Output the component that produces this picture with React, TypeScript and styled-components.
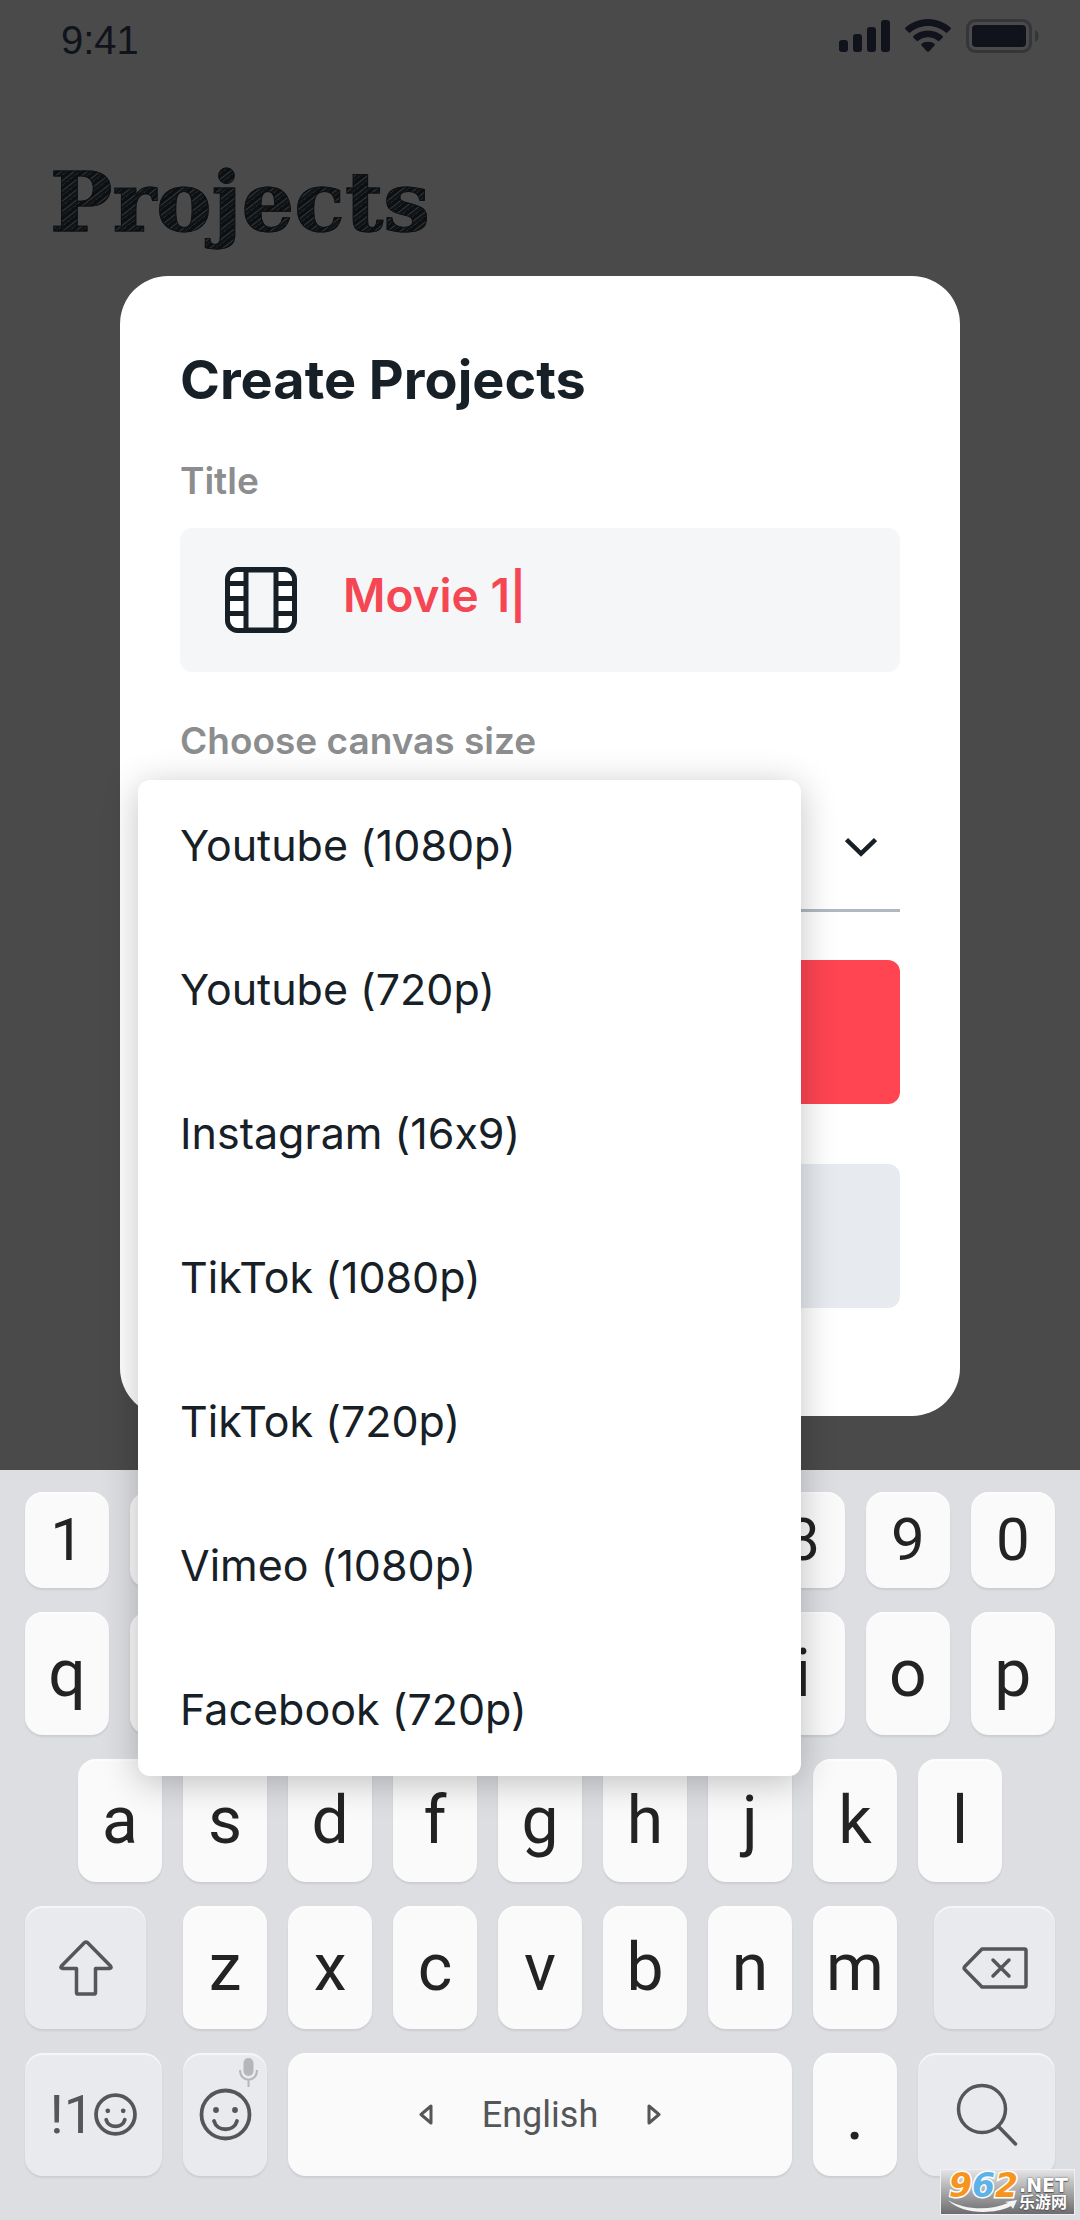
import React, { useState } from "react";
import styled, { createGlobalStyle } from "styled-components";

const GlobalStyle = createGlobalStyle`
  *, *::before, *::after { box-sizing: border-box; }
  body { margin: 0; background: #dddee2; }
  button, input, select { font: inherit; color: inherit; margin: 0; padding: 0; border: 0; }
  h1, h2, ul { margin: 0; padding: 0; }
`;

const ui = `Inter, "Open Sans", sans-serif`;
const ink = "#162026";

const Page = styled.div`
  position: relative;
  display: flex;
  flex-direction: column;
  min-height: 100vh;
  font-family: ${ui};
  color: ${ink};
`;

const Backdrop = styled.main`
  background: #4a4a4a;
  padding-bottom: 54px;
`;

const StatusBar = styled.header`
  display: flex;
  justify-content: space-between;
  align-items: flex-start;
  height: 72px;
  padding: 19px 41px 0 61px;
  font-family: "Liberation Sans", Arial, sans-serif;
  font-size: 40px;
  line-height: 42px;
  color: #10131c;
`;

const StatusIcons = styled.div`
  display: flex;
  gap: 15px;
`;

const Heading = styled.h1`
  width: max-content;
  padding: 74px 0 0 50px;
  height: 204px;
  font-family: "DejaVu Serif", serif;
  font-size: 83px;
  line-height: 112px;
  font-weight: 700;
  color: transparent;
  background: repeating-linear-gradient(
    142deg,
    #0c1013 0px,
    #0c1013 3px,
    #343739 4px,
    #101417 5px,
    #101417 7px,
    #292d2f 8px
  );
  background-clip: text;
  -webkit-text-stroke: 1px #0c1013;
`;

const Dialog = styled.section`
  position: relative;
  z-index: 2;
  display: flex;
  flex-direction: column;
  margin: 0 120px;
  padding: 72px 60px 108px;
  border-radius: 48px;
  background: #fff;
`;

const DialogTitle = styled.h2`
  font-size: 54px;
  line-height: 64px;
  font-weight: 700;
`;

const Label = styled.label`
  margin-top: 46px;
  font-size: 37px;
  line-height: 46px;
  font-weight: 600;
  color: #8b8d8e;
`;

const TitleBox = styled.div`
  display: flex;
  align-items: center;
  gap: 46px;
  height: 144px;
  margin-top: 24px;
  padding: 0 45px;
  border-radius: 12px;
  background: #f5f6f8;
`;

const TitleInput = styled.input`
  flex: 1;
  min-width: 0;
  height: 100%;
  padding-bottom: 10px;
  background: transparent;
  outline: none;
  font-size: 46px;
  font-weight: 600;
  color: #f54653;
`;

const SelectWrap = styled.div`
  position: relative;
  display: flex;
  height: 148px;
  margin-bottom: 48px;
`;

const SizeSelect = styled.select`
  flex: 1;
  appearance: none;
  background: transparent;
  border-bottom: 3px solid #b1b8c1;
  font-size: 43px;
  outline: none;
`;

const Chevron = styled.svg`
  position: absolute;
  right: 23px;
  top: 73px;
  pointer-events: none;
`;

const Menu = styled.ul`
  position: absolute;
  top: 16px;
  left: -42px;
  right: 99px;
  display: flex;
  flex-direction: column;
  gap: 88px;
  padding: 37px 42px 39px;
  list-style: none;
  border-radius: 12px;
  background: #fff;
  box-shadow: 0 6px 36px rgba(0, 0, 0, 0.24);
`;

const MenuItem = styled.button`
  display: block;
  width: 100%;
  background: transparent;
  text-align: left;
  font-size: 43px;
  line-height: 56px;
  font-variant-ligatures: no-contextual;
`;

const Action = styled.button<{ $tone: string }>`
  height: 144px;
  border-radius: 12px;
  background: ${(p) => p.$tone};
  & + & {
    margin-top: 60px;
  }
`;

const Keyboard = styled.section`
  flex: 1;
  display: flex;
  flex-direction: column;
  gap: 24px;
  padding: 22px 25px 44px;
  background: #dddee2;
  font-family: Roboto, sans-serif;
`;

const KeyRow = styled.div<{ $inset?: number }>`
  display: flex;
  gap: 21px;
  padding: 0 ${(p) => p.$inset ?? 0}px;
`;

const Key = styled.button<{ $grow?: number; $short?: boolean; $soft?: boolean; $size?: number }>`
  position: relative;
  flex: ${(p) => p.$grow ?? 84} 1 0;
  min-width: 0;
  height: ${(p) => (p.$short ? 96 : 123)}px;
  display: flex;
  align-items: center;
  justify-content: center;
  border-radius: 18px;
  background: ${(p) => (p.$soft ? "#e9eaee" : "#fafafa")};
  color: ${(p) => (p.$soft || p.$size === 36 ? "#555658" : "#232323")};
  box-shadow: 0 2px 2px rgba(0, 0, 0, 0.08), inset 0 2px 1px rgba(255, 255, 255, 0.6);
  font-size: ${(p) => p.$size ?? (p.$short ? 60 : 66)}px;
  line-height: 80px;
`;

const Spacer = styled.span`
  flex: 16 1 0;
  margin-right: -21px;
`;

const Language = styled.span`
  margin: 0 49px;
`;

const Mic = styled.svg`
  position: absolute;
  top: 5px;
  right: 9px;
`;

const Watermark = styled.aside`
  position: absolute;
  right: 5px;
  bottom: 5px;
  z-index: 3;
  display: flex;
  width: 135px;
  height: 46px;
  padding: 0 4px 0 8px;
  border: 1px solid #f0f0f2;
  background: linear-gradient(#e4e4e6, #b4b4b5 40%, #6c6c6e);
`;

const Brand = styled.div`
  width: 70px;
  font-family: "DejaVu Sans", sans-serif;
  font-size: 33px;
  line-height: 32px;
  font-style: italic;
  font-weight: 700;
  -webkit-text-stroke: 3px #fff;
  paint-order: stroke fill;
`;

const Digit = styled.span<{ $c: string }>`
  color: ${(p) => p.$c};
`;

const Site = styled.div`
  display: flex;
  flex-direction: column;
  padding-top: 6px;
  font-family: "DejaVu Sans", "Noto Sans CJK SC", sans-serif;
  font-weight: 700;
  font-size: 19px;
  line-height: 18px;
  color: #fff;
  text-shadow: 0 0 2px #555, 0 1px 1px #555;
`;

const SiteName = styled.span`
  font-size: 16px;
`;

const Swoosh = styled.svg`
  position: absolute;
  left: 7px;
  bottom: 1px;
`;

const sizes = [
  "Youtube (1080p)",
  "Youtube (720p)",
  "Instagram (16x9)",
  "TikTok (1080p)",
  "TikTok (720p)",
  "Vimeo (1080p)",
  "Facebook (720p)",
];

const SignalIcon = () => (
  <svg width="51" height="34" viewBox="0 0 51 34" fill="currentColor" aria-hidden="true">
    <rect x="0" y="21" width="9" height="12" rx="3" />
    <rect x="14" y="15" width="9" height="18" rx="3" />
    <rect x="28" y="8" width="9" height="25" rx="3" />
    <rect x="42" y="1" width="9" height="32" rx="3" />
  </svg>
);

const WifiIcon = () => (
  <svg width="46" height="34" viewBox="0 0 46 34" fill="currentColor" aria-hidden="true">
    <path d="M23 0C14 0 6.200 3.500.5 8.600q-.8.800 0 1.700l3.200 3.200q.8.700 1.600 0C10 9.400 16 7 23 7s13 2.400 17.700 6.500q.8.700 1.600 0l3.200-3.200q.8-.9 0-1.700C39.800 3.500 32 0 23 0Z" />
    <path d="M23 11.500c-6 0-11 2.200-14.600 5.600q-.9.800 0 1.700l3.200 3q.8.700 1.700 0c2.600-2.300 5.700-3.600 9.700-3.600s7.100 1.300 9.700 3.600q.9.700 1.700 0l3.200-3q.9-.9 0-1.700C34 13.700 29 11.500 23 11.500Z" />
    <path d="M23 22.700c-2.800 0-5 .8-6.500 2.200q-.7.800 0 1.500l5.500 6q1 .9 2 0l5.500-6q.7-.7 0-1.500c-1.500-1.400-3.700-2.200-6.500-2.200Z" />
  </svg>
);

const BatteryIcon = () => (
  <svg width="73" height="34" viewBox="0 0 73 34" aria-hidden="true">
    <rect x="1.500" y="1.500" width="63" height="31" rx="8" fill="none" stroke="#35363a" strokeWidth="3" />
    <rect x="6" y="6" width="54" height="22" rx="4" fill="currentColor" />
    <path d="M69 11c5 2.500 5 9.500 0 12Z" fill="#35363a" />
  </svg>
);

const FilmIcon = () => (
  <svg width="72" height="66" viewBox="0 0 72 66" fill="none" stroke={ink} strokeWidth="5" aria-hidden="true">
    <rect x="2.500" y="2.500" width="67" height="61" rx="10" fill="#fff" />
    <path d="M21 3h30v60H21z" fill="#f5f6f8" />
    <path d="M3 16.500h18M3 31.500h18M3 46.500h18M51 16.500h18M51 31.500h18M51 46.500h18" />
  </svg>
);

const Smiley = ({ size }: { size: number }) => (
  <svg width={size} height={size} viewBox="0 0 53 53" fill="none" stroke="currentColor" strokeWidth={200 / size} strokeLinecap="round" aria-hidden="true">
    <circle cx="26.500" cy="26.500" r="24" />
    <circle cx="17" cy="22" r="2.900" fill="currentColor" stroke="none" />
    <circle cx="36" cy="22" r="2.900" fill="currentColor" stroke="none" />
    <path d="M15 33c3 11 20 11 23 0" />
  </svg>
);

const ShiftIcon = () => (
  <svg width="54" height="56" viewBox="0 0 54 56" fill="none" stroke="currentColor" strokeWidth="3.500" strokeLinejoin="round" aria-hidden="true">
    <path d="M25.600 2.600q1.400-1.200 2.800 0L51.500 26q1.500 2-.8 2.400H36.500v24q0 1.700-1.700 1.700H19.200q-1.700 0-1.700-1.700v-24H3.300Q1 28 2.500 26Z" />
  </svg>
);

const BackspaceIcon = () => (
  <svg width="66" height="42" viewBox="0 0 66 42" fill="none" stroke="currentColor" strokeWidth="3.500" strokeLinecap="round" strokeLinejoin="round" aria-hidden="true">
    <path d="M20 2h42.500q1.500 0 1.500 1.500v35q0 1.500-1.500 1.500H20L2.600 22.200q-1-1.200 0-2.400Z" />
    <path d="m31 13 16 16M47 13 31 29" />
  </svg>
);

const SearchIcon = () => (
  <svg width="62" height="64" viewBox="0 0 62 64" fill="none" stroke="currentColor" strokeWidth="3.500" strokeLinecap="round" aria-hidden="true">
    <circle cx="26" cy="26" r="23.500" />
    <path d="m42 43 17.500 18" />
  </svg>
);

const Arrow = ({ back }: { back?: boolean }) => (
  <svg width="14" height="21" viewBox="0 0 14 21" fill="none" stroke="currentColor" strokeWidth="3" strokeLinejoin="round" aria-hidden="true">
    <path d={back ? "M12 2v17L2 10.500Z" : "M2 2v17l10-8.500Z"} />
  </svg>
);

// Keys that sit fully under the open menu carry only an accessible name.
const underMenu = "234567wertyu";

const keys = (row: string, short = false) =>
  row.split("").map((c) => (
    <Key key={c} type="button" $short={short} aria-label={c}>
      {underMenu.includes(c) && row.length === 10 ? null : c}
    </Key>
  ));

export default function App() {
  const [title, setTitle] = useState("Movie 1|");
  const [size, setSize] = useState(sizes[0]);

  return (
    <Page>
      <GlobalStyle />
      <Backdrop>
        <StatusBar>
          <span>9:41</span>
          <StatusIcons>
            <SignalIcon />
            <WifiIcon />
            <BatteryIcon />
          </StatusIcons>
        </StatusBar>
        <Heading>Projects</Heading>

        <Dialog role="dialog" aria-labelledby="dialog-title">
          <DialogTitle id="dialog-title">Create Projects</DialogTitle>
          <Label htmlFor="title">Title</Label>
          <TitleBox>
            <FilmIcon />
            <TitleInput id="title" type="text" value={title} onChange={(e) => setTitle(e.target.value)} />
          </TitleBox>
          <Label htmlFor="size">Choose canvas size</Label>
          <SelectWrap>
            <SizeSelect id="size" value={size} onChange={(e) => setSize(e.target.value)}>
              {sizes.map((s) => (
                <option key={s}>{s}</option>
              ))}
            </SizeSelect>
            <Chevron width="32" height="21" viewBox="0 0 32 21" fill="none" stroke={ink} strokeWidth="4.500" aria-hidden="true">
              <path d="m1.500 2.500 14.500 14 14.500-14" />
            </Chevron>
            <Menu>
              {sizes.map((s) => (
                <li key={s}>
                  <MenuItem type="button" onClick={() => setSize(s)}>{s}</MenuItem>
                </li>
              ))}
            </Menu>
          </SelectWrap>
          <Action type="button" $tone="#ff4452" aria-label="Create" />
          <Action type="button" $tone="#e7eaef" aria-label="Cancel" />
        </Dialog>
      </Backdrop>

      <Keyboard aria-label="Keyboard">
        <KeyRow>{keys("1234567890", true)}</KeyRow>
        <KeyRow>{keys("qwertyuiop")}</KeyRow>
        <KeyRow $inset={53}>{keys("asdfghjkl")}</KeyRow>
        <KeyRow>
          <Key $grow={121} $soft aria-label="Shift"><ShiftIcon /></Key>
          <Spacer />
          {keys("zxcvbnm")}
          <Spacer />
          <Key $grow={121} $soft aria-label="Backspace"><BackspaceIcon /></Key>
        </KeyRow>
        <KeyRow>
          <Key $grow={137} $soft $size={54}>!1<Smiley size={43} /></Key>
          <Key $soft aria-label="Emoji">
            <Smiley size={53} />
            <Mic width="19" height="29" viewBox="0 0 19 29" fill="none" stroke="#b5b6b9" strokeWidth="2" aria-hidden="true">
              <rect x="4.500" y="0" width="10" height="18" rx="5" fill="#b5b6b9" stroke="none" />
              <path d="M1 12c0 13 17 13 17 0M9.500 22v7" />
            </Mic>
          </Key>
          <Key $grow={504} $size={36}>
            <Arrow back />
            <Language>English</Language>
            <Arrow />
          </Key>
          <Key $size={72}>.</Key>
          <Key $grow={137} $soft aria-label="Search"><SearchIcon /></Key>
        </KeyRow>
      </Keyboard>

      <Watermark>
        <Brand>
          <Digit $c="#f7941e">9</Digit>
          <Digit $c="#5db2e8">6</Digit>
          <Digit $c="#f7941e">2</Digit>
        </Brand>
        <Site>
          <span>.NET</span>
          <SiteName>乐游网</SiteName>
        </Site>
        <Swoosh width="70" height="13" viewBox="0 0 70 13" fill="#f4f4f4" aria-hidden="true">
          <path d="M0 0c16 10 42 11 60 3l-3-1 12-2-4 9-2-3C43 16 12 13 0 0Z" />
        </Swoosh>
      </Watermark>
    </Page>
  );
}
